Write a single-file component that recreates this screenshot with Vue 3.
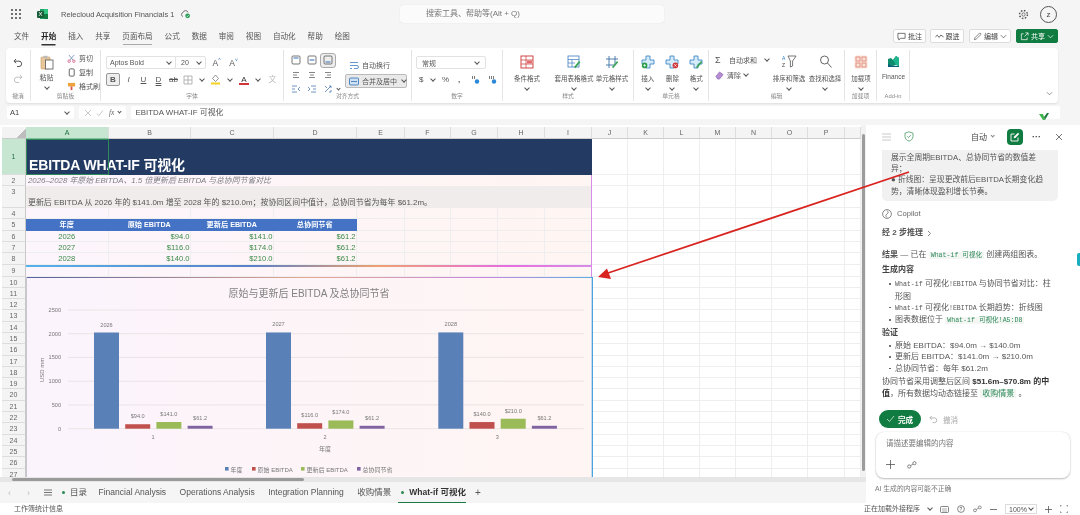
<script setup>
const menus = ['文件','开始','插入','共享','页面布局','公式','数据','审阅','视图','自动化','帮助','绘图']
const colNames = ['A','B','C','D','E','F','G','H','I','J','K','L','M','N','O','P','']
const rowNums = Array.from({ length: 27 }, (_, i) => i + 1)
const tableRows = [
  { row: 5, head: true, cells: ['年度','原始 EBITDA','更新后 EBITDA','总协同节省'] },
  { row: 6, cells: ['2026','$94.0','$141.0','$61.2'] },
  { row: 7, cells: ['2027','$116.0','$174.0','$61.2'] },
  { row: 8, cells: ['2028','$140.0','$210.0','$61.2'] }
]
const base = 427.7
const unit = 0.04748
const seriesColors = ['#5a80b8','#c0504d','#9bbb59','#8064a2']
const groups = [
  { x: 94, cat: '1', vals: [2026,94,141,61.2] },
  { x: 266, cat: '2', vals: [2027,116,174,61.2] },
  { x: 438.3, cat: '3', vals: [2028,140,210,61.2] }
]
const bars = groups.flatMap(g => g.vals.map((v, i) => ({
  x: g.x + i * 31.2,
  y: base - v * unit,
  h: v * unit,
  fill: seriesColors[i],
  label: i === 0 ? String(v) : '$' + v.toFixed(1)
})))
const axis = [2500,2000,1500,1000,500,0].map(v => ({ v, y: base - v * unit }))
const legend = [
  { x: 225, t: '年度', c: seriesColors[0] },
  { x: 252, t: '原始 EBITDA', c: seriesColors[1] },
  { x: 301, t: '更新后 EBITDA', c: seriesColors[2] },
  { x: 357, t: '总协同节省', c: seriesColors[3] }
]
const sheets = ['Financial Analysis','Operations Analysis','Integration Planning','收购情景']
</script>

<template>
  <div class="app">
    <header class="titlebar">
      <svg class="waffle" width="10" height="10" viewBox="0 0 10 10"><g fill="#444"><circle v-for="p in [[1,1],[5,1],[9,1],[1,5],[5,5],[9,5],[1,9],[5,9],[9,9]]" :key="p.join()" :cx="p[0]" :cy="p[1]" r="1"/></g></svg>
      <svg class="xl" width="12" height="12" viewBox="0 0 12 12"><path d="M3 1h8v10H3z" fill="#21a366"/><path d="M7 1h4v5H7z" fill="#33c481"/><path d="M7 6h4v5H7z" fill="#107c41"/><rect y="3" width="7" height="7" rx="1" fill="#185c37"/><text x="3.5" y="8.4" font-size="6" fill="#fff" text-anchor="middle" font-family="Liberation Sans">X</text></svg>
      <span class="doc">Relecloud Acquisition Financials 1</span>
      <svg class="cloud" width="11" height="10" viewBox="0 0 11 10"><path d="M3 7.5A2 2 0 0 1 3 3.6 2.6 2.6 0 0 1 8 3.4" fill="none" stroke="#555" stroke-width=".8"/><circle cx="7.6" cy="6.8" r="2.4" fill="#2c9e5a"/><path d="M6.5 6.8l.8.8 1.4-1.4" fill="none" stroke="#fff" stroke-width=".7"/></svg>
      <div class="search">搜索工具、帮助等(Alt + Q)</div>
      <svg class="gear" width="11" height="11" viewBox="0 0 12 12"><circle cx="6" cy="6" r="1.8" fill="none" stroke="#555" stroke-width=".8"/><circle cx="6" cy="6" r="4.3" fill="none" stroke="#555" stroke-width="1.6" stroke-dasharray="1.7 1.67"/></svg>
      <div class="avatar">z</div>
    </header>

    <div class="menubar">
      <nav class="menus"><span v-for="m in menus" :key="m" :class="{ active: m === '开始', hover: m === '页面布局' }">{{ m }}</span></nav>
      <div class="actions">
        <button class="act w-33"><svg width="9" height="9" viewBox="0 0 10 10"><path d="M1 1.5h8v5.5H4L2 9V7H1z" fill="none" stroke="#444" stroke-width=".8"/></svg>批注</button>
        <button class="act w-34"><svg width="9" height="9" viewBox="0 0 10 10"><path d="M.5 5.5l2-2 2 2.5 2-2.5 3 2" fill="none" stroke="#444" stroke-width=".9"/></svg>跟进</button>
        <button class="act w-42"><svg width="9" height="9" viewBox="0 0 10 10"><path d="M1.5 8.5l.5-2L7.5 1 9 2.5 3.5 8z" fill="none" stroke="#444" stroke-width=".7"/></svg>编辑<svg width="7" height="7" viewBox="0 0 8 8"><path d="M1 2.5l3 3 3-3" fill="none" stroke="#444" stroke-width=".8"/></svg></button>
        <button class="act share"><svg width="9" height="9" viewBox="0 0 10 10"><path d="M4 2H1.5v6.5H8V6M5 5l4-4M6 1h3v3" fill="none" stroke="#fff" stroke-width=".8"/></svg>共享<svg width="7" height="7" viewBox="0 0 8 8"><path d="M1 2.5l3 3 3-3" fill="none" stroke="#fff" stroke-width=".8"/></svg></button>
      </div>
    </div>

    <section class="ribbon">
      <div class="grp g-undo">
        <div class="body col-c gap6">
          <svg width="10" height="10" viewBox="0 0 10 10"><path d="M3 1L1 3.2l2.2 2M1 3.2h5a2.6 2.6 0 0 1 0 5.3H4" fill="none" stroke="#444" stroke-width=".9"/></svg>
          <svg width="10" height="10" viewBox="0 0 10 10"><path d="M7 1l2 2.2-2.2 2M9 3.2H4a2.6 2.6 0 0 0 0 5.3h2" fill="none" stroke="#bbb" stroke-width=".9"/></svg>
        </div>
        <div class="lab">撤消</div>
      </div>
      <div class="grp g-clip">
        <div class="body clip">
          <div class="big">
            <svg width="14" height="15" viewBox="0 0 14 15"><rect x="1" y="2" width="9" height="12" rx="1" fill="#e9c79b" stroke="#c89a62" stroke-width=".6"/><rect x="3.5" y=".8" width="4" height="2.4" fill="#bbb"/><rect x="5.5" y="5" width="7.5" height="9" fill="#fff" stroke="#555" stroke-width=".8"/></svg>
            <span>粘贴</span><i class="chev"></i>
          </div>
          <div class="small-list">
            <div><svg width="9" height="9" viewBox="0 0 10 10"><path d="M2 1l5 6M8 1L3 7" stroke="#5a7fb0" stroke-width=".8" fill="none"/><circle cx="2.4" cy="8" r="1.4" fill="none" stroke="#c36" stroke-width=".7"/><circle cx="7.6" cy="8" r="1.4" fill="none" stroke="#c36" stroke-width=".7"/></svg>剪切</div>
            <div><svg width="9" height="9" viewBox="0 0 10 10"><rect x="2.5" y="1" width="5.5" height="8" rx="1" fill="none" stroke="#444" stroke-width=".9"/></svg>复制</div>
            <div><svg width="9" height="9" viewBox="0 0 10 10"><rect x="1" y="1" width="8" height="4" fill="#eda23c"/><path d="M5 5v4" stroke="#d9534f" stroke-width="2"/></svg>格式刷</div>
          </div>
        </div>
        <div class="lab">剪贴板</div>
      </div>
      <div class="grp g-font">
        <div class="body font">
          <div class="frow">
            <div class="combo c-font"><span>Aptos Bold</span><i class="chev"></i></div>
            <div class="combo c-size"><span>20</span><i class="chev"></i></div>
            <span class="grow-a">A<sup>^</sup></span><span class="grow-a">A<sup>˅</sup></span>
          </div>
          <div class="frow fmt">
            <span class="fb">B</span><span class="fi">I</span><span class="fu">U</span><span class="fd">D</span><span class="fs">ab</span>
            <svg width="10" height="10" viewBox="0 0 10 10"><path d="M1 1h8v8H1zM5 1v8M1 5h8" fill="none" stroke="#999" stroke-width=".7"/></svg><i class="chev"></i>
            <svg width="11" height="11" viewBox="0 0 11 11"><path d="M5.5 1l3 3.5-3 3-3-3z" fill="#fff" stroke="#666" stroke-width=".7"/><rect x="1" y="8.5" width="9" height="2" fill="#f6d21f"/></svg><i class="chev"></i>
            <span class="fa">A</span><i class="chev"></i>
            <span class="fw">文</span>
          </div>
        </div>
        <div class="lab">字体</div>
      </div>
      <div class="grp g-align">
        <div class="body align">
          <div class="agrid">
            <span class="ai"><svg width="10" height="10" viewBox="0 0 10 10"><rect x="1" y="1" width="8" height="8" rx="1" fill="none" stroke="#555" stroke-width=".8"/><path d="M2.5 3h5" stroke="#2f6fb5"/></svg></span>
            <span class="ai"><svg width="10" height="10" viewBox="0 0 10 10"><rect x="1" y="1" width="8" height="8" rx="1" fill="none" stroke="#555" stroke-width=".8"/><path d="M2.5 5h5" stroke="#2f6fb5"/></svg></span>
            <span class="ai sel"><svg width="10" height="10" viewBox="0 0 10 10"><rect x="1" y="1" width="8" height="8" rx="1" fill="none" stroke="#555" stroke-width=".8"/><path d="M2.5 7h5" stroke="#2f6fb5"/></svg></span>
            <span v-for="d in ['M2 2.5h6M2 5h4M2 7.5h6','M2 2.5h6M3 5h4M2 7.5h6','M2 2.5h6M4 5h4M2 7.5h6']" :key="d" class="ai"><svg width="10" height="10" viewBox="0 0 10 10"><path :d="d" stroke="#666" stroke-width=".8"/></svg></span>
            <span class="ai"><svg width="10" height="10" viewBox="0 0 10 10"><path d="M1 2h5M1 5h3M1 8h5M9 3L7 5l2 2" stroke="#4a78b5" fill="none" stroke-width=".8"/></svg></span>
            <span class="ai"><svg width="10" height="10" viewBox="0 0 10 10"><path d="M4 2h5M6 5h3M4 8h5M1 3l2 2-2 2" stroke="#4a78b5" fill="none" stroke-width=".8"/></svg></span>
            <span class="ai"><svg width="10" height="10" viewBox="0 0 10 10"><path d="M2 8l6-6M6 2h2v2M2 2l2 2M6 8h2V6" stroke="#4a78b5" fill="none" stroke-width=".8"/></svg><i class="chev mini"></i></span>
          </div>
          <div class="wrapcol">
            <div class="wrap"><svg width="10" height="9" viewBox="0 0 10 9"><path d="M1 1.5h8M1 4.5h7a1.4 1.4 0 0 1 0 3H5M1 7.5h2" stroke="#3f7cc2" fill="none" stroke-width=".8"/></svg>自动换行</div>
            <div class="merge"><svg width="10" height="9" viewBox="0 0 10 9"><rect x=".5" y="1" width="9" height="7" rx="1" fill="#cfe0f3" stroke="#2f6fb5" stroke-width=".8"/><path d="M2 4.5h6" stroke="#2f6fb5" stroke-width=".8"/></svg>合并及居中<i class="chev"></i></div>
          </div>
        </div>
        <div class="lab">对齐方式</div>
      </div>
      <div class="grp g-num">
        <div class="body num">
          <div class="combo c-num"><span>常规</span><i class="chev"></i></div>
          <div class="nrow"><span class="cur">$</span><i class="chev"></i><span class="pct">%</span><b class="comma">,</b>
            <svg width="10" height="11" viewBox="0 0 9 11"><path d="M1 2v3M3 2v3" stroke="#555" stroke-width=".8"/><circle cx="5.5" cy="7.5" r="2.2" fill="#2b88d8"/></svg>
            <svg width="10" height="11" viewBox="0 0 9 11"><path d="M1 2v3M3 2v3M5 2v3" stroke="#555" stroke-width=".8"/><circle cx="5.5" cy="7.5" r="2.2" fill="#2b88d8"/></svg>
          </div>
        </div>
        <div class="lab">数字</div>
      </div>
      <div class="grp g-style">
        <div class="body tall left">
          <div class="tool t46"><svg width="14" height="14" viewBox="0 0 14 14"><rect x="1" y="1" width="12" height="12" fill="#fff" stroke="#c33" stroke-width=".9"/><path d="M1 5h12M1 9h12M6 1v12" stroke="#c33" stroke-width=".7"/><rect x="7" y="5.5" width="5" height="3" fill="#e06c6c"/></svg><span>条件格式</span><i class="chev"></i></div>
          <div class="tool t40"><svg width="14" height="14" viewBox="0 0 14 14"><rect x="1" y="1" width="11" height="11" fill="#fff" stroke="#3f7cc2" stroke-width=".8"/><path d="M1 4.5h11M1 8h7M5 4.5V12" stroke="#3f7cc2" stroke-width=".7"/><path d="M7 12l5-6 1.4 1.2-5 6z" fill="#3aa655"/></svg><span>套用表格格式</span><i class="chev"></i></div>
          <div class="tool t36"><svg width="14" height="14" viewBox="0 0 14 14"><path d="M4 1v12M10 1v8M1 4h12M1 10h8" stroke="#3f6fa5" stroke-width=".9" fill="none"/><path d="M7 12l5-6 1.2 1.2-5 6z" fill="#3aa655"/></svg><span>单元格样式</span><i class="chev"></i></div>
        </div>
        <div class="lab">样式</div>
      </div>
      <div class="grp g-cell">
        <div class="body tall">
          <div class="tool t24"><svg width="14" height="14" viewBox="0 0 14 14"><path d="M5 1h4v4h4v4H9v4H5V9H1V5h4z" fill="#d6ebf9" stroke="#2f7cc0" stroke-width=".8"/><circle cx="3.6" cy="10.4" r="2.8" fill="#2c9e4b"/><path d="M2.2 10.4h2.8M3.6 9v2.8" stroke="#fff" stroke-width=".7"/></svg><span>插入</span><i class="chev"></i></div>
          <div class="tool t22"><svg width="14" height="14" viewBox="0 0 14 14"><path d="M5 1h4v4h4v4H9v4H5V9H1V5h4z" fill="#d6ebf9" stroke="#2f7cc0" stroke-width=".8"/><circle cx="10.4" cy="10.4" r="2.8" fill="#d13438"/><path d="M9.2 9.2l2.4 2.4M11.6 9.2l-2.4 2.4" stroke="#fff" stroke-width=".7"/></svg><span>删除</span><i class="chev"></i></div>
          <div class="tool t22"><svg width="14" height="14" viewBox="0 0 14 14"><path d="M5 1h4v4h4v4H9v4H5V9H1V5h4z" fill="#d6ebf9" stroke="#2f7cc0" stroke-width=".8"/><path d="M7 12l5-6 1.2 1.2-5 6z" fill="#3aa655"/></svg><span>格式</span><i class="chev"></i></div>
        </div>
        <div class="lab">单元格</div>
      </div>
      <div class="grp g-edit">
        <div class="body edit">
          <div class="elist">
            <div><span class="sig">Σ</span>自动求和<i class="chev e1"></i></div>
            <div><svg width="9" height="9" viewBox="0 0 10 10"><path d="M1 6l4-5 4 3-4 5H3z" fill="#b58bd1" stroke="#7a4ea5" stroke-width=".6"/></svg>清除<i class="chev"></i></div>
          </div>
          <div class="tool t34"><svg width="15" height="15" viewBox="0 0 15 15"><path d="M6 2h8L10.6 7v5L8.4 13V7z" fill="none" stroke="#555" stroke-width=".8"/><text x="0" y="6" font-size="5" fill="#2f7cc0" font-family="Liberation Sans">A</text><text x="0" y="13" font-size="5" fill="#444" font-family="Liberation Sans">Z</text></svg><span>排序和筛选</span><i class="chev"></i></div>
          <div class="tool t34"><svg width="15" height="15" viewBox="0 0 15 15"><circle cx="6.5" cy="6" r="4" fill="none" stroke="#555" stroke-width=".9"/><path d="M9.5 9l4 4.5" stroke="#555" stroke-width=".9"/></svg><span>查找和选择</span><i class="chev"></i></div>
        </div>
        <div class="lab">编辑</div>
      </div>
      <div class="grp g-add">
        <div class="body tall">
          <div class="tool t30"><svg width="14" height="14" viewBox="0 0 14 14"><rect x=".5" y=".5" width="13" height="13" rx="2" fill="#fbe3dc"/><g fill="none" stroke="#d9826c" stroke-width=".8"><rect x="2" y="2" width="4" height="4"/><rect x="8" y="2" width="4" height="4"/><rect x="2" y="8" width="4" height="4"/><rect x="8" y="8" width="4" height="4"/></g></svg><span>加载项</span><i class="chev"></i></div>
        </div>
        <div class="lab">加载项</div>
      </div>
      <div class="grp g-fin">
        <div class="body tall">
          <div class="tool t30"><svg width="13" height="13" viewBox="0 0 13 13"><path d="M1 4l3-1 2 2 3-4 3 2v8l-3-1-3 1-5-1z" fill="#0f8c6b"/><path d="M6 5l3-4 3 2v8l-3-1z" fill="#1fb58c"/><path d="M1 9l5 2 6 0v1H1z" fill="#0a5f78"/></svg><span class="fin">Finance</span></div>
        </div>
        <div class="lab">Add-in</div>
      </div>
      <svg class="rib-chev" width="7" height="7" viewBox="0 0 8 8"><path d="M1 2.5l3 3 3-3" fill="none" stroke="#555" stroke-width=".7"/></svg>
    </section>

    <div class="formula">
      <div class="namebox"><span>A1</span><i class="chev"></i></div>
      <div class="fxbox">
        <svg width="8" height="8" viewBox="0 0 8 8"><path d="M1 1l6 6M7 1L1 7" stroke="#bbb" stroke-width=".8"/></svg>
        <svg width="8" height="8" viewBox="0 0 8 8"><path d="M1 4.5l2 2 4-5" fill="none" stroke="#bbb" stroke-width=".8"/></svg>
        <em>fx</em><i class="chev mini"></i>
      </div>
      <div class="finput">EBITDA WHAT-IF 可视化
        <svg class="yv" width="12" height="10" viewBox="0 0 12 10"><path d="M1 2l4 6h2L5 2z" fill="#3cb54a"/><path d="M6 5l3-4h2L7 8z" fill="#1f7a3f"/></svg>
      </div>
    </div>

    <main class="body-wrap">
      <div class="workspace">
        <div class="sheet-row">
          <div class="sheet">
            <div class="corner"></div>
            <div v-for="(c, i) in colNames" :key="'h' + i" class="colhead" :class="{ on: i === 0 }" :style="{ gridColumn: i + 2 }">{{ c }}</div>
            <div class="tint"></div>
            <template v-for="r in rowNums" :key="r">
              <div class="rowhead" :class="{ on: r === 1 }" :style="{ gridRow: r + 1 }">{{ r }}</div>
              <div v-for="(c, i) in colNames" :key="i" class="cell" :style="{ gridRow: r + 1, gridColumn: i + 2 }"></div>
            </template>
            <div class="banner">EBITDA WHAT-IF 可视化</div>
            <div class="sub">2026–2028 年原始 EBITDA、1.5 倍更新后 EBITDA 与总协同节省对比</div>
            <div class="note">更新后 EBITDA 从 2026 年的 $141.0m 增至 2028 年的 $210.0m；按协同区间中值计，总协同节省为每年 $61.2m。</div>
            <template v-for="t in tableRows" :key="t.row">
              <div v-for="(c, i) in t.cells" :key="i" class="tc" :class="[t.head ? 'thead' : 'tbody', i === 0 ? 'first' : '']" :style="{ gridRow: t.row + 1, gridColumn: i + 2 }">{{ c }}</div>
            </template>
            <div class="line9"></div>
            <div class="edge"></div>
            <svg class="chart" viewBox="26 276 567 201" preserveAspectRatio="none">
              <defs><linearGradient id="cbg" x1="0" x2="1"><stop offset="0" stop-color="#fcf4fd"/><stop offset="1" stop-color="#fff5f3"/></linearGradient>
              <linearGradient id="ctop" x1="0" x2="1"><stop offset="0" stop-color="#3f5197"/><stop offset=".5" stop-color="#e7a184"/><stop offset=".8" stop-color="#c878e0"/><stop offset="1" stop-color="#4aa3df"/></linearGradient></defs>
              <rect x="26" y="276" width="567" height="201" fill="url(#cbg)"/>
              <rect x="26" y="275.5" width="567" height="1.4" fill="url(#ctop)"/>
              <rect x="591.7" y="276" width="1.3" height="201" fill="#4aa3df"/>
              <rect x="26" y="276" width="1" height="201" fill="#c9c4d0"/>
              <text x="309" y="295.5" class="c-title" text-anchor="middle">原始与更新后 EBITDA 及总协同节省</text>
              <g v-for="a in axis" :key="a.v">
                <line x1="68" x2="584" :y1="a.y" :y2="a.y" stroke="#e4e0e0" stroke-width=".8"/>
                <text x="61" :y="a.y + 2" class="c-lab" text-anchor="end">{{ a.v }}</text>
              </g>
              <g v-for="b in bars" :key="b.x">
                <rect :x="b.x" :y="b.y" width="25" :height="b.h" :fill="b.fill"/>
                <text :x="b.x + 12.5" :y="b.y - 6" class="c-lab" text-anchor="middle">{{ b.label }}</text>
              </g>
              <text v-for="g in groups" :key="g.cat" :x="g.x + 59" y="438" class="c-lab" text-anchor="middle">{{ g.cat }}</text>
              <text x="325" y="449.5" class="c-lab2" text-anchor="middle">年度</text>
              <text transform="translate(43.5 369) rotate(-90)" class="c-lab2" text-anchor="middle">USD mm</text>
              <g v-for="l in legend" :key="l.t">
                <rect :x="l.x" y="466" width="3.6" height="3.6" :fill="l.c"/>
                <text :x="l.x + 5.5" y="470.5" class="c-lab2">{{ l.t }}</text>
              </g>
            </svg>
            <div class="selbox"></div>
          </div>
          <div class="vscroll"><i></i></div>
        </div>
        <div class="hscroll"><i></i></div>
        <div class="tabs">
          <span class="nav">‹</span><span class="nav">›</span>
          <svg class="ham" width="8" height="7" viewBox="0 0 8 7"><path d="M0 1h8M0 3.5h8M0 6h8" stroke="#555" stroke-width=".8"/></svg>
          <span class="tab dotted toc"><i></i>目录</span>
          <span v-for="s in sheets" :key="s" class="tab">{{ s }}</span>
          <span class="tab dotted current"><i></i>What-if 可视化</span>
          <span class="plus">+</span>
        </div>
      </div>

      <aside class="panel">
        <div class="phead">
          <svg width="9" height="8" viewBox="0 0 9 8"><path d="M0 1h9M0 4h9M0 7h9" stroke="#bbb" stroke-width=".8"/></svg>
          <svg class="shield" width="10" height="11" viewBox="0 0 10 11"><path d="M5 .8l4 1.4v3.2c0 2.4-1.8 4-4 4.8-2.2-.8-4-2.4-4-4.8V2.2z" fill="none" stroke="#4a9a62" stroke-width=".8"/><path d="M3.2 5.3l1.3 1.3 2.3-2.4" fill="none" stroke="#4a9a62" stroke-width=".8"/></svg>
          <span class="auto">自动<i class="chev"></i></span>
          <span class="newbtn"><svg width="10" height="10" viewBox="0 0 10 10"><path d="M8 5.5V9H1V2h3.5" fill="none" stroke="#fff" stroke-width=".9"/><path d="M3.8 6.2l.3-1.6L8 .8l1.2 1.2-3.8 3.9z" fill="#fff"/></svg></span>
          <span class="dots">···</span>
          <svg class="close" width="8" height="8" viewBox="0 0 8 8"><path d="M1 1l6 6M7 1L1 7" stroke="#555" stroke-width=".8"/></svg>
        </div>
        <div class="msgs">
          <div class="bubble">展示全周期EBITDA、总协同节省的数值差<br>异；<br>● 折线图：呈现更改前后EBITDA长期变化趋<br>势，清晰体现盈利增长节奏。</div>
          <div class="cop"><svg width="10" height="10" viewBox="0 0 10 10"><circle cx="5" cy="5" r="4.4" fill="none" stroke="#555" stroke-width=".7"/><path d="M5 1.5C6.5 3 6.5 4 5 5S3.5 7 5 8.5" fill="none" stroke="#555" stroke-width=".7"/></svg>Copilot</div>
          <div class="steps">经 2 步推理<svg width="5" height="7" viewBox="0 0 5 7"><path d="M1 1l2.5 2.5L1 6" fill="none" stroke="#555" stroke-width=".7"/></svg></div>
          <p class="p1"><b>结果</b> — 已在 <code>What-if 可视化</code> 创建两组图表。</p>
          <h4 class="h-first">生成内容</h4>
          <ul>
            <li><span class="m">What-if</span> 可视化<span class="m">!EBITDA</span> 与协同节省对比：柱<br>形图</li>
            <li><span class="m">What-if</span> 可视化<span class="m">!EBITDA</span> 长期趋势：折线图</li>
            <li>图表数据位于 <code>What-if 可视化!A5:D8</code></li>
          </ul>
          <h4>验证</h4>
          <ul class="tight">
            <li>原始 EBITDA：$94.0m → $140.0m</li>
            <li>更新后 EBITDA：$141.0m → $210.0m</li>
            <li>总协同节省：每年 $61.2m</li>
          </ul>
          <p class="p2">协同节省采用调整后区间 <b>$51.6m–$70.8m 的中<br>值</b>，所有数据均动态链接至 <code class="plain">收购情景</code> 。</p>
        </div>
        <div class="done">
          <button class="donebtn"><svg width="9" height="8" viewBox="0 0 9 8"><path d="M1 4l2.5 2.5L8 1" fill="none" stroke="#cfe9d9" stroke-width=".8"/></svg>完成</button>
          <span class="undo"><svg width="9" height="9" viewBox="0 0 10 10"><path d="M3 1L1 3.2l2.2 2M1 3.2h5a2.6 2.6 0 0 1 0 5.3H4" fill="none" stroke="#aaa" stroke-width=".9"/></svg>撤消</span>
        </div>
        <div class="prompt">
          <div class="ph">请描述要编辑的内容</div>
          <div class="ptools">
            <svg width="9" height="9" viewBox="0 0 9 9"><path d="M4.5 0v9M0 4.5h9" stroke="#555" stroke-width=".8"/></svg>
            <svg width="10" height="8" viewBox="0 0 10 8"><circle cx="2.2" cy="5.5" r="1.6" fill="none" stroke="#555" stroke-width=".7"/><circle cx="7.5" cy="2.2" r="1.6" fill="none" stroke="#555" stroke-width=".7"/><path d="M3.6 4.6l2.5-1.6" stroke="#555" stroke-width=".7"/></svg>
          </div>
        </div>
        <div class="disc">AI 生成的内容可能不正确</div>
      </aside>
    </main>

    <footer class="status">
      <span class="st-left">工作簿统计信息</span>
      <div class="st-right">
        <span>正在加载外接程序</span><i class="chev"></i>
        <svg width="9" height="7" viewBox="0 0 9 7"><rect x=".5" y=".5" width="8" height="6" rx="1" fill="none" stroke="#555" stroke-width=".7"/><path d="M2 3h5M2 5h5" stroke="#555" stroke-width=".5"/></svg>
        <svg width="8" height="8" viewBox="0 0 8 8"><circle cx="4" cy="4" r="3.4" fill="none" stroke="#555" stroke-width=".7"/><text x="4" y="6" font-size="5" text-anchor="middle" fill="#555" font-family="Liberation Sans">?</text></svg>
        <svg width="9" height="8" viewBox="0 0 10 8"><circle cx="2.2" cy="5.5" r="1.6" fill="none" stroke="#555" stroke-width=".7"/><circle cx="7.5" cy="2.2" r="1.6" fill="none" stroke="#555" stroke-width=".7"/><path d="M3.6 4.6l2.5-1.6" stroke="#555" stroke-width=".7"/></svg>
        <svg width="7" height="7" viewBox="0 0 7 7"><path d="M0 3.5h7" stroke="#555" stroke-width=".8"/></svg>
        <span class="zoom">100%<i class="chev"></i></span>
        <svg width="7" height="7" viewBox="0 0 7 7"><path d="M0 3.5h7M3.5 0v7" stroke="#555" stroke-width=".8"/></svg>
        <svg width="8" height="8" viewBox="0 0 8 8"><path d="M0 2V0h2M6 0h2v2M8 6v2H6M2 8H0V6" fill="none" stroke="#555" stroke-width=".7"/></svg>
      </div>
    </footer>

    <svg class="arrow" width="1080" height="515" viewBox="0 0 1080 515">
      <path d="M909 172L608 273" stroke="#d8231f" stroke-width="1.7" fill="none"/>
      <path d="M598 277L607 268.5L611 279z" fill="#d8231f"/>
    </svg>
    <i class="edge-tab"></i>
  </div>
</template>

<style>
html, body { margin: 0; background: #f5f5f5; overflow: hidden; }
</style>

<style scoped>
.app { position: relative; width: 1080px; height: 515px; overflow: hidden; background: #f5f5f5; display: flex; flex-direction: column; font-family: "Liberation Sans", "Noto Sans CJK SC", sans-serif; color: #444; font-size: 7.5px; filter: blur(.35px); }
button { font: inherit; border: 0; background: none; padding: 0; color: inherit; }
svg { flex: none; display: block; }
.chev { display: inline-block; flex: none; width: 3px; height: 3px; border-right: .8px solid #555; border-bottom: .8px solid #555; transform: rotate(45deg); margin-top: -2px; }
.chev.mini { width: 2px; height: 2px; }

.titlebar { height: 28px; display: flex; align-items: center; position: relative; padding-left: 11px; flex: none; }
.xl { margin-left: 16px; }
.doc { margin-left: 12px; font-size: 7.5px; color: #555; width: 118px; white-space: nowrap; }
.cloud { margin-left: 1px; }
.search { margin-left: 209px; width: 264px; height: 18px; box-sizing: border-box; background: #fbfbfb; border-radius: 3px; box-shadow: 0 0 1px #ccc; padding: 0 0 0 26px; line-height: 18px; color: #777; font-size: 8px; }
.gear { margin-left: 354px; }
.avatar { margin-left: 11px; width: 17px; height: 17px; border: .8px solid #555; box-sizing: border-box; border-radius: 50%; text-align: center; line-height: 15px; font-size: 8px; }

.menubar { height: 19px; flex: none; display: flex; justify-content: space-between; padding: 0 22px 0 14px; }
.menus { display: flex; gap: 11.9px; font-size: 7.6px; padding-top: 3px; color: #555; line-height: 11px; }
.menus .active { font-weight: 700; color: #222; box-shadow: 0 2px 0 -0.5px #333; height: 13px; }
.menus .hover { box-shadow: 0 2px 0 -1px #aaa; height: 13px; }
.actions { display: flex; gap: 4px; padding-top: 1px; }
.act { height: 14px; background: #fff; border: .5px solid #ddd; border-radius: 2px; display: flex; align-items: center; justify-content: center; gap: 2px; box-sizing: border-box; font-size: 7px; }
.w-33 { width: 33px; } .w-34 { width: 34px; margin-right: 1px; } .w-42 { width: 42px; margin-right: 1px; }
.act.share { width: 42px; background: #107c41; color: #fff; border-color: #107c41; }

.ribbon { height: 55px; margin: 1px 22px 0 6px; flex: none; background: #fff; border-radius: 4px; box-shadow: 0 1px 2px #ddd; display: flex; position: relative; font-size: 7px; color: #555; }
.grp { box-sizing: border-box; border-right: .8px solid #e5e5e5; margin: 2px 0; display: flex; flex-direction: column; height: 51px; flex: none; }
.g-undo { width: 25px; } .g-clip { width: 70px; } .g-font { width: 183px; } .g-align { width: 128px; } .g-num { width: 91px; } .g-style { width: 131px; } .g-cell { width: 75px; } .g-edit { width: 136px; } .g-add { width: 32px; } .g-fin { width: 33px; }
.body { flex: 1; min-height: 0; }
.lab { height: 9px; text-align: center; font-size: 5.8px; line-height: 9px; color: #888; margin-bottom: 0; }
.col-c { display: flex; flex-direction: column; align-items: center; padding-top: 8px; }
.gap6 { gap: 6px; }
.clip { display: flex; padding: 3px 0 0 3px; }
.big { width: 25px; display: flex; flex-direction: column; align-items: center; padding-top: 2px; gap: 2px; }
.big .chev { margin-top: 1px; }
.small-list { margin-left: 8px; display: flex; flex-direction: column; gap: 5px; padding-top: 1px; }
.small-list div { display: flex; align-items: center; gap: 3px; line-height: 9px; white-space: nowrap; }

.font { padding: 6px 0 0 5px; display: flex; flex-direction: column; gap: 3px; }
.frow { display: flex; align-items: center; height: 13px; }
.combo { height: 13px; box-sizing: border-box; border: .6px solid #e2e2e2; display: flex; align-items: center; justify-content: space-between; border-radius: 2px; padding: 0 4px 0 3px; }
.c-font { width: 69px; border-right: 0; border-radius: 2px 0 0 2px; }
.c-size { width: 31px; border-radius: 0 2px 2px 0; margin-right: 2px; padding-left: 5px; }
.grow-a { width: 17px; text-align: center; font-size: 8.5px; }
.grow-a sup { font-size: 5px; color: #2f6fb5; line-height: 0; }
.fmt { margin-top: 1px; gap: 0; }
.fmt > span { width: 15px; text-align: center; font-size: 8px; line-height: 13px; flex: none; }
.fmt .fb { width: 14px; height: 13px; box-sizing: border-box; background: #eee; border: .7px solid #999; border-radius: 2px; font-weight: 700; line-height: 11.5px; margin-right: 1px; }
.fi { font-style: italic; }
.fu { text-decoration: underline; }
.fd { text-decoration: underline double; }
.fs { text-decoration: line-through; }
.fmt svg { margin-left: 2px; }
.fmt .chev { margin: -2px 4px 0 7px; }
.fa { color: #333; box-shadow: inset 0 -2px 0 #d13438; width: 10px !important; line-height: 11px !important; height: 11px; margin-left: 3px; }
.fw { color: #bbb; margin-left: 1px; }

.align { display: flex; padding: 3px 0 0 4px; }
.agrid { display: grid; grid-template-columns: repeat(3, 16px); grid-auto-rows: 14.5px; }
.ai { display: flex; align-items: center; justify-content: center; gap: 1px; position: relative; }
.ai.sel { background: #eee; border: .7px solid #aaa; border-radius: 3px; box-sizing: border-box; }
.ai .mini { position: absolute; right: -4px; top: 7px; }
.wrapcol { margin-left: 9px; display: flex; flex-direction: column; width: 62px; font-size: 7px; white-space: nowrap; }
.wrap { display: flex; align-items: center; gap: 3px; height: 14px; padding: 5px 0 0 4px; }
.merge { display: flex; align-items: center; gap: 3px; height: 14px; background: #e9e9e9; border: .7px solid #bbb; border-radius: 2px; box-sizing: border-box; padding: 0 4px 0 3px; margin-top: 2px; justify-content: space-between; }
.merge .chev { margin-left: 2px; }

.num { padding: 6px 0 0 4px; }
.c-num { width: 70px; padding-left: 5px; padding-right: 6px; }
.nrow { display: flex; align-items: center; height: 15px; margin-top: 3px; padding-left: 3px; font-size: 8px; }
.nrow .chev { margin: -2px 7px 0 6px; }
.cur { width: 6px; }
.pct { width: 9px; }
.comma { width: 10px; margin: 0 3px; text-align: center; }
.nrow svg { margin-left: 4px; }
.nrow svg + svg { margin-left: 7px; }

.tall { display: flex; padding-top: 4px; padding-left: 1px; justify-content: space-around; }
.tall.left { justify-content: flex-start; }
.tool { display: flex; flex-direction: column; align-items: center; gap: 2px; flex: none; white-space: nowrap; padding-top: 1px; font-size: 6.5px; }
.t46 { width: 46px; } .t40 { width: 40px; margin-left: 4px; } .t36 { width: 36px; } .t24 { width: 24px; } .t22 { width: 22px; } .t34 { width: 34px; } .t30 { width: 30px; }
.tool span { line-height: 11px; margin-top: 2px; }
.tool .chev { margin-top: 0; }
.edit { display: flex; padding: 3px 2px 0 6px; }
.elist { width: 57px; display: flex; flex-direction: column; gap: 5px; padding-top: 2px; flex: none; font-size: 7px; }
.elist div { display: flex; align-items: center; gap: 3px; height: 10px; }
.sig { font-size: 9px; width: 9px; margin-right: 2px; }
.e1 { margin-left: 5px; }
.edit .tool + .tool { margin-left: 2px; }
.fin { margin-top: 1px !important; font-size: 6.5px; }
.rib-chev { position: absolute; right: 5px; bottom: 6px; }

.formula { height: 13px; flex: none; margin: 3px 20px 0 7px; display: flex; font-size: 7.5px; }
.namebox { width: 67px; background: #fff; display: flex; align-items: center; justify-content: space-between; padding: 0 5px 0 3px; box-sizing: border-box; border-radius: 2px; }
.fxbox { width: 47px; margin-left: 5px; background: #fff; border-radius: 2px; display: flex; align-items: center; gap: 4px; padding-left: 5px; box-sizing: border-box; color: #999; }
.fxbox em { font-family: "Liberation Serif", serif; margin-left: 1px; color: #666; }
.finput { margin-left: 5px; flex: 1; background: #fff; border-radius: 2px; padding-left: 4.5px; line-height: 13px; color: #555; position: relative; font-size: 7.9px; }
.yv { position: absolute; right: 10px; top: 6px; }

.body-wrap { position: relative; margin-top: 6px; height: 378px; flex: none; display: flex; }
.workspace { width: 866px; display: flex; flex-direction: column; flex: none; }
.sheet-row { height: 352px; display: flex; flex: none; overflow: hidden; }
.sheet { width: 861px; box-sizing: border-box; padding-left: 2px; background: #fff; display: grid; position: relative; overflow: hidden; grid-template-columns: 24px 83px 82px 83px 83px 48px 46px 47px 47px 47px 36px 36px 36px 36px 36px 36px 37px 16px; grid-template-rows: 14px 36px 11px 22px 11px 12px 11px 11px 12px 11.5px repeat(18, 11.3px); align-content: start; }
.sheet > * { min-width: 0; min-height: 0; }
.corner { grid-row: 1; grid-column: 1; background: linear-gradient(135deg, #f3f3f3 72%, #bdbdbd 72%); margin-top: 2px; border-bottom: .8px solid #ccc; }
.colhead { grid-row: 1; margin-top: 2px; background: #f4f4f4; border-bottom: .8px solid #ccc; border-right: .6px solid #ddd; text-align: center; font-size: 7px; line-height: 11px; color: #666; box-sizing: border-box; }
.colhead.on { background: #c6e6d2; color: #1f6e43; border-bottom-color: #7fbf9a; }
.rowhead { grid-column: 1; background: #f4f4f4; border-bottom: .6px solid #ddd; border-right: .8px solid #c8c8c8; text-align: center; font-size: 7px; color: #666; line-height: 11px; box-sizing: border-box; }
.rowhead.on { background: #c6e6d2; color: #1f6e43; line-height: 36px; }
.cell { border-right: .6px solid #eee; border-bottom: .6px solid #eee; box-sizing: border-box; }
.tint { grid-row: 3 / 11; grid-column: 2 / 11; background: linear-gradient(90deg, #fcf5fc, #fff5f2); }
.banner { grid-row: 2; grid-column: 2 / 11; background: #233b63; color: #fff; font-size: 14px; font-weight: 700; padding: 0 0 1px 3px; display: flex; align-items: flex-end; z-index: 1; white-space: nowrap; letter-spacing: -.15px; }
.sub { grid-row: 3; grid-column: 2 / 11; background: linear-gradient(90deg, #fcf5fc, #fff5f2); font-style: italic; color: #7d7d85; padding-left: 2px; line-height: 11px; white-space: nowrap; font-size: 7.85px; }
.note { grid-row: 4; grid-column: 2 / 11; background: #f1ecec; color: #555; padding: 11px 0 0 2px; line-height: 11px; white-space: nowrap; font-size: 7.95px; box-sizing: border-box; overflow: hidden; }
.tc { text-align: right; padding-right: 1.5px; line-height: 11px; font-size: 7.6px; white-space: nowrap; }
.thead { background: #4472c4; color: #fff; text-align: center; font-weight: 700; font-size: 7.2px; }
.tbody { color: #3a8a46; }
.tbody.first { text-align: center; }
.line9 { grid-row: 10; grid-column: 2 / 11; height: 1.5px; align-self: start; background: linear-gradient(90deg, #56b1ea, #5a7fc8 40%, #f0a070 62%, #e86de0 85%, #d88be8); }
.edge { grid-row: 3 / 11; grid-column: 10; justify-self: end; width: 1.5px; background: #d88be8; z-index: 1; }
.chart { grid-row: 11 / 29; grid-column: 2 / 11; width: calc(100% + 1px); height: 201px; overflow: hidden; }
.c-title { font-size: 10px; fill: #808080; }
.c-lab { font-size: 5.6px; fill: #777; }
.c-lab2 { font-size: 6px; fill: #777; }
.selbox { grid-row: 2; grid-column: 2; border: 1px solid #2f8a5b; box-sizing: border-box; z-index: 2; }

.vscroll { width: 5px; background: #f2f2f2; position: relative; }
.vscroll i { position: absolute; left: 1px; top: 9px; width: 3px; bottom: 6px; background: #9c9c9c; border-radius: 2px; }
.hscroll { height: 5px; flex: none; background: #e6e6e6; position: relative; }
.hscroll i { position: absolute; left: 12px; top: 1px; width: 292px; height: 3px; background: #9a9a9a; border-radius: 2px; }
.tabs { height: 21px; flex: none; display: flex; align-items: center; padding-left: 8px; font-size: 8.5px; color: #555; white-space: nowrap; }
.nav { width: 19px; color: #bbb; font-size: 9px; }
.ham { margin: 0 7px 0 -2px; }
.tab { margin-right: 13.5px; line-height: 21px; position: relative; display: flex; align-items: center; }
.dotted i { width: 3px; height: 3px; background: #2a8a52; border-radius: 50%; margin-right: 5px; margin-left: 3px; }
.toc { margin-right: 11.5px; }
.current { font-weight: 700; color: #333; box-shadow: inset 0 -1px 0 #1a7a44; margin-left: -6.5px; margin-right: 9px; height: 21px; }
.plus { font-size: 10px; }

.panel { width: 214px; background: #fff; display: flex; flex-direction: column; flex: none; position: relative; }
.phead { height: 25px; flex: none; display: flex; align-items: center; padding: 0 0 2px 16px; box-sizing: border-box; position: relative; }
.shield { margin-left: 13px; }
.auto { margin-left: 57px; display: flex; align-items: center; gap: 4px; font-size: 8px; width: 36px; }
.auto .chev { width: 2.4px; height: 2.4px; border-color: #888; }
.newbtn { width: 16px; height: 16px; border-radius: 4px; background: #107c41; display: flex; align-items: center; justify-content: center; }
.dots { margin-left: 9px; width: 16px; font-weight: 700; font-size: 9px; }
.close { margin-left: 7px; }
.msgs { height: 256px; flex: none; overflow: hidden; padding: 0 22px 0 16px; font-size: 8px; line-height: 11.4px; color: #555; }
.bubble { background: #f1f1f1; border-radius: 0 0 5px 5px; padding: 2px 0 5px 9px; width: 176px; box-sizing: border-box; line-height: 11.2px; color: #555; height: 51px; font-size: 7.8px; white-space: nowrap; }
.cop { margin-top: 8px; display: flex; align-items: center; gap: 5px; color: #666; font-size: 7.6px; height: 10px; }
.steps { margin-top: 9px; display: flex; align-items: center; gap: 4px; font-weight: 700; height: 10px; color: #555; }
.p1 { margin: 11px 0 0; white-space: nowrap; }
h4 { margin: 1px 0 0; font-size: 8px; font-weight: 700; color: #444; line-height: 11px; }
h4.h-first { margin-top: 3px; }
ul { margin: 3px 0 0; padding: 0 0 0 13px; list-style: none; }
ul.tight { margin-top: 2px; }
li { position: relative; line-height: 11.2px; white-space: nowrap; }
li::before { content: ""; position: absolute; left: -6px; top: 5px; width: 1.6px; height: 1.6px; background: #555; border-radius: 50%; }
.m { font-family: "Liberation Mono", monospace; font-size: 6.6px; }
code { font-family: "Liberation Mono", "Noto Sans CJK SC", monospace; font-size: 6.6px; color: #2f8a5b; background: #f3f6f3; padding: 0 2px; }
code.plain { font-size: 8px; font-family: inherit; }
.p2 { margin: 2px 0 0; line-height: 11.8px; white-space: nowrap; }
.p2 b { color: #333; }
.done { height: 23px; flex: none; display: flex; align-items: center; padding: 3px 0 0 13px; box-sizing: border-box; }
.donebtn { width: 42px; height: 18px; border-radius: 9px; background: #107c41; color: #fff; font-weight: 700; display: flex; align-items: center; gap: 3px; padding-left: 7px; box-sizing: border-box; font-size: 7.6px; }
.undo { margin-left: 8px; display: flex; align-items: center; gap: 5px; color: #aaa; }
.prompt { margin: 3px 0 0 10px; width: 194px; height: 46px; flex: none; background: #fff; border-radius: 8px; box-shadow: 0 1px 2px #bbb, 0 0 1px #ccc; box-sizing: border-box; padding: 6px 10px; color: #777; }
.ph { line-height: 11px; }
.ptools { display: flex; gap: 12px; align-items: center; margin-top: 11px; }
.disc { margin: 6px 0 0 9px; font-size: 6.8px; color: #777; line-height: 10px; }

.status { height: 12px; flex: none; background: #fff; display: flex; justify-content: space-between; font-size: 7px; color: #555; line-height: 12px; position: relative; }
.st-left { padding-left: 14px; }
.st-right { display: flex; align-items: center; gap: 8px; padding-right: 12px; }
.zoom { width: 32px; height: 10px; border: .5px solid #ddd; box-sizing: border-box; display: flex; align-items: center; justify-content: space-between; padding: 0 3px; line-height: 9px; }

.arrow { position: absolute; left: 0; top: 0; pointer-events: none; z-index: 5; }
.edge-tab { position: absolute; right: 0; top: 253px; width: 3px; height: 13px; background: #19aebf; border-radius: 2px 0 0 2px; z-index: 5; }
</style>
